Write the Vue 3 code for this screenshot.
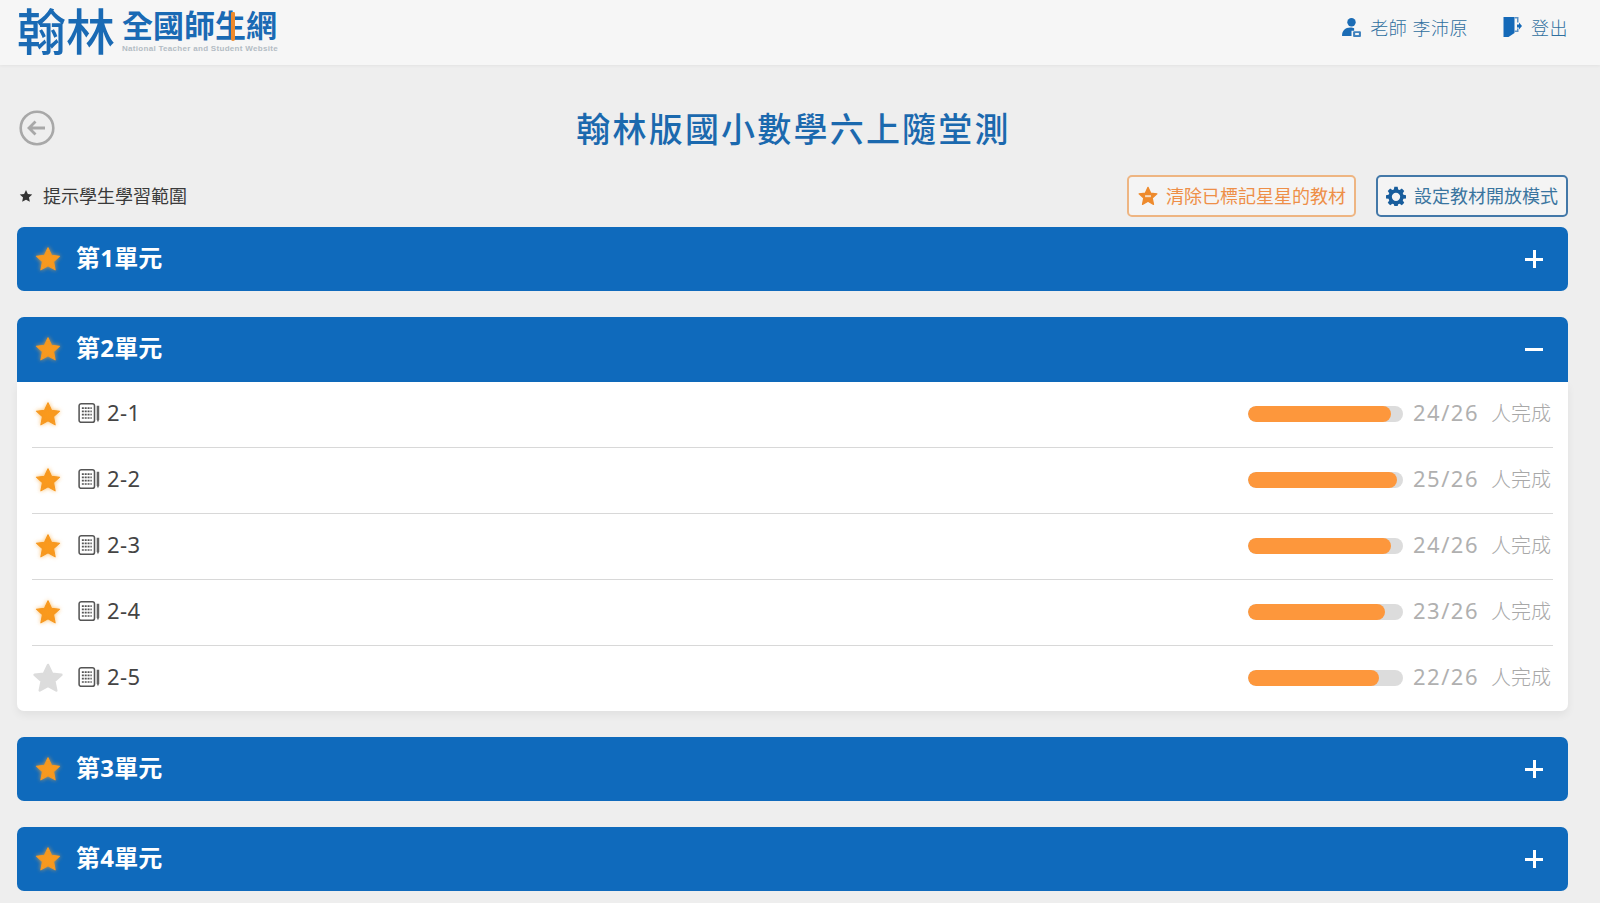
<script setup>
const units = [
  { name: '第1單元', open: false },
  {
    name: '第2單元',
    open: true,
    rows: [
      { id: '2-1', done: 24, starred: true },
      { id: '2-2', done: 25, starred: true },
      { id: '2-3', done: 24, starred: true },
      { id: '2-4', done: 23, starred: true },
      { id: '2-5', done: 22, starred: false },
    ],
  },
  { name: '第3單元', open: false },
  { name: '第4單元', open: false },
]
const total = 26
const starPath = 'M12 1.6l3.2 6.9 7.5.9-5.6 5.1 1.5 7.5L12 18.3l-6.6 3.7 1.5-7.5L1.3 9.4l7.5-.9z'
</script>

<template>
  <div class="page">
    <svg class="defs" width="0" height="0" aria-hidden="true">
      <defs>
        <radialGradient id="starFill" cx="50%" cy="55%" r="55%">
          <stop offset="0%" stop-color="#fb9a1c" />
          <stop offset="70%" stop-color="#f7981f" />
          <stop offset="100%" stop-color="#f9b650" />
        </radialGradient>
      </defs>
    </svg>

    <header class="topbar">
      <div class="logo">
        <span class="logo-main">翰林</span>
        <div class="logo-side">
          <span class="logo-name">全國師生網</span>
          <span class="logo-en">National Teacher and Student Website</span>
          <i class="logo-pencil"></i>
        </div>
      </div>
      <nav class="usernav">
        <span class="navitem">
          <svg class="navicon" viewBox="0 0 20 20">
            <circle cx="10" cy="5" r="4" fill="#1b6cb5" />
            <path d="M1 18c0-5 3-8 8-8 1.500 0 2.500.2 3.500.7V13H10v5z" fill="#1b6cb5" />
            <rect x="11.500" y="13.500" width="7.500" height="5.500" rx="1" fill="#3d80bd" />
            <rect x="13.500" y="15.200" width="3.500" height="2" fill="#f5f5f5" />
          </svg>
          老師 李沛原
        </span>
        <span class="navitem">
          <svg class="navicon door" viewBox="0 0 20 22">
            <path d="M1 1h11v16l-6 4H1z" fill="#1469b8" />
            <path d="M12 1h4v5.500h-1.500V2.500H12zM12 16h4v-3.500h-1.500v2H12z" fill="#5d93c6" />
            <path d="M14.500 8.500h2V6.500l3 3.500-3 3.500v-2h-2z" fill="#1469b8" />
          </svg>
          登出
        </span>
      </nav>
    </header>

    <main class="content">
      <div class="titlebar">
        <svg class="back" viewBox="0 0 36 36">
          <circle cx="18" cy="18" r="16.300" fill="none" stroke="#a8a8a8" stroke-width="2.600" />
          <path d="M26 18H10M16.500 11.500 10 18l6.500 6.500" fill="none" stroke="#a8a8a8" stroke-width="2.800" />
        </svg>
        <h1 class="title">翰林版國小數學六上隨堂測</h1>
      </div>

      <div class="toolbar">
        <div class="legend">
          <svg class="legend-star" viewBox="0 0 24 24"><path :d="starPath" fill="#333" /></svg>
          <span class="shift">提示學生學習範圍</span>
        </div>
        <div class="actions">
          <button class="btn btn-clear" type="button">
            <svg class="btn-icon" viewBox="0 0 24 24">
              <path :d="starPath" fill="#ee8a2c" stroke="#ee8a2c" stroke-width="1.500" stroke-linejoin="round" />
              <rect x="8.500" y="11" width="7" height="2.400" fill="#f6dcc2" />
            </svg>
            <span class="shift">清除已標記星星的教材</span>
          </button>
          <button class="btn btn-set" type="button">
            <svg class="btn-icon" viewBox="0 0 24 24">
              <path
                fill="#185d9c"
                fill-rule="evenodd"
                d="M10 1h4l.6 3.100 1.800.8L19 3.100 21.900 6l-1.800 2.600.8 1.800L24 11v4l-3.100.4-.8 1.900 1.800 2.700L19 23l-2.600-1.800-1.800.7L14 24h-4l-.6-2.100-1.800-.7L5 23l-2.900-3 1.800-2.700-.8-1.900L0 15v-4l3.100-.6.800-1.800L2.100 6 5 3.100l2.600 1.800 1.800-.8zM12 8a5 5 0 1 0 0 10 5 5 0 0 0 0-10z"
              />
            </svg>
            <span class="shift">設定教材開放模式</span>
          </button>
        </div>
      </div>

      <section v-for="unit in units" :key="unit.name" class="unit">
        <div class="unit-head" :class="{ 'unit-head-open': unit.open }">
          <svg class="star" viewBox="0 0 24 24"><path :d="starPath" fill="url(#starFill)" stroke="#f7981f" stroke-width="1" stroke-linejoin="round" /></svg>
          <span class="unit-name">{{ unit.name }}</span>
          <span class="toggle" :class="{ 'toggle-open': unit.open }"></span>
        </div>
        <ul v-if="unit.open" class="rows">
          <li v-for="row in unit.rows" :key="row.id" class="row">
            <svg class="star" :class="{ 'star-off': !row.starred }" viewBox="0 0 24 24">
              <path
                :d="starPath"
                :fill="row.starred ? 'url(#starFill)' : '#dcdcdc'"
                :stroke="row.starred ? '#f7981f' : '#dcdcdc'"
                :stroke-width="row.starred ? 1 : 2"
                stroke-linejoin="round"
              />
            </svg>
            <svg class="book" viewBox="0 0 20 20">
              <rect x="1" y="1.500" width="14" height="17" rx="2" fill="none" stroke="#555" stroke-width="1.400" />
              <path d="M3.500 5.500h9M3.500 8.500h9M3.500 11.500h9M3.500 14.500h9" stroke="#555" stroke-width="1.500" stroke-dasharray="1.800 .8" />
              <path d="M17 3.500h2.300V16l-1.150 2.500L17 16z" fill="#666" />
            </svg>
            <span class="row-id">{{ row.id }}</span>
            <div class="bar">
              <div class="bar-fill" :style="{ width: (row.done / total) * 100 + '%' }"></div>
            </div>
            <span class="count">{{ row.done }}/{{ total }}</span>
            <span class="count-label">人完成</span>
          </li>
        </ul>
      </section>
    </main>
  </div>
</template>

<style scoped>
.page {
  height: 903px;
  overflow: hidden;
  background: #eeeeee;
  font-family: "Noto Sans", "Noto Sans CJK TC", sans-serif;
  color: #333;
}
.defs {
  position: absolute;
}
.topbar {
  height: 65px;
  box-sizing: border-box;
  padding: 0 32px 0 17px;
  display: flex;
  align-items: center;
  justify-content: space-between;
  background: #f6f6f6;
  box-shadow: 0 1px 3px rgba(0, 0, 0, 0.05);
}
.logo {
  display: flex;
  align-items: center;
  gap: 7px;
  margin-top: -5px;
  color: #1a6ab4;
}
.logo-main {
  font-family: "Liberation Sans", "Noto Sans CJK TC", sans-serif;
  font-size: 49px;
  line-height: 52px;
  font-weight: 500;
  position: relative;
  top: 3px;
}
.logo-side {
  position: relative;
  display: flex;
  flex-direction: column;
  margin-top: 4px;
}
.logo-name {
  font-family: "Liberation Sans", "Noto Sans CJK TC", sans-serif;
  font-size: 31px;
  line-height: 32px;
  font-weight: 700;
}
.logo-en {
  font-family: "Liberation Sans", sans-serif;
  font-size: 8px;
  line-height: 9px;
  font-weight: 700;
  color: #b3bcc4;
  white-space: nowrap;
  letter-spacing: 0.3px;
  margin-top: 1px;
}
.logo-pencil {
  position: absolute;
  left: 109px;
  top: 1px;
  width: 4px;
  height: 29px;
  background: #ee8a2c;
  border-radius: 2px 2px 3px 3px;
}
.usernav {
  display: flex;
  align-items: center;
  gap: 34px;
  margin-top: -11px;
}
.navitem {
  display: flex;
  align-items: center;
  gap: 8px;
  font-size: 18px;
  font-weight: 300;
  letter-spacing: 0.5px;
  color: #2f6f9f;
}
.navicon {
  width: 21px;
  height: 21px;
}
.door {
  height: 22px;
}
.content {
  padding: 0 32px 0 17px;
}
.titlebar {
  position: relative;
  height: 79px;
  margin-top: 25px;
  display: flex;
  align-items: flex-start;
  justify-content: center;
}
.back {
  position: absolute;
  left: 2px;
  top: 20px;
  width: 36px;
  height: 36px;
}
.title {
  margin: 14px 0 0;
  padding-left: 2px;
  font-size: 34px;
  line-height: 50px;
  font-weight: 500;
  letter-spacing: 2.2px;
  color: #1b69ae;
}
.toolbar {
  display: flex;
  align-items: center;
  justify-content: space-between;
  height: 42px;
  margin-top: 6px;
  margin-bottom: 10px;
}
.shift {
  padding-bottom: 3px;
}
.legend {
  display: flex;
  align-items: center;
  gap: 10px;
  font-size: 18px;
  font-weight: 400;
  color: #3a3a3a;
  padding-left: 2px;
}
.legend-star {
  width: 14px;
  height: 14px;
}
.actions {
  display: flex;
  gap: 20px;
}
.btn {
  height: 42px;
  box-sizing: border-box;
  display: flex;
  align-items: center;
  gap: 8px;
  padding: 0 8px 0 9px;
  border-radius: 5px;
  background: #f4f4f4;
  font-family: inherit;
  font-size: 18px;
  font-weight: 400;
  white-space: nowrap;
}
.btn-clear {
  width: 229px;
  border: 2px solid #eeb582;
  color: #ee8f48;
}
.btn-set {
  width: 192px;
  padding-left: 8px;
  border: 2px solid #4378a8;
  color: #3a759f;
}
.btn-icon {
  width: 20px;
  height: 20px;
  flex: none;
}
.unit {
  margin-bottom: 25.6px;
}
.unit-head {
  height: 64.4px;
  box-sizing: border-box;
  padding: 0 16px 0 18px;
  display: flex;
  align-items: center;
  border-radius: 7px;
  background: #0f6abc;
  color: #fff;
}
.unit-head-open {
  height: 65px;
  border-radius: 7px 7px 0 0;
}
.star {
  width: 26px;
  height: 26px;
  flex: none;
  margin-top: -1px;
  filter: drop-shadow(0 0 2px rgba(250, 170, 60, 0.8));
}
.star-off {
  width: 30px;
  height: 30px;
  margin: -1px -2px 0;
  filter: none;
}
.unit-name {
  margin-left: 15px;
  padding-bottom: 6px;
  font-size: 24px;
  letter-spacing: 0.2px;
  font-weight: 700;
}
.toggle {
  position: relative;
  width: 18px;
  height: 18px;
  margin-left: auto;
  margin-right: 9px;
}
.toggle::before,
.toggle::after {
  content: "";
  position: absolute;
  background: #fff;
}
.toggle::before {
  left: 0;
  right: 0;
  top: 7.5px;
  height: 3px;
}
.toggle::after {
  top: 0;
  bottom: 0;
  left: 7.5px;
  width: 3px;
}
.toggle-open::after {
  display: none;
}
.rows {
  list-style: none;
  margin: 0;
  padding: 0 15px;
  background: #fff;
  border-radius: 0 0 7px 7px;
  box-shadow: 0 4px 8px rgba(0, 0, 0, 0.06);
}
.row {
  height: 65.9px;
  box-sizing: border-box;
  display: flex;
  align-items: center;
  padding-left: 3px;
  border-bottom: 1px solid #d8d8d8;
}
.row:last-child {
  border-bottom: none;
}
.book {
  width: 22px;
  height: 22px;
  margin-left: 17px;
  margin-top: -2px;
  flex: none;
}
.row-id {
  margin-left: 7px;
  padding-bottom: 5px;
  font-size: 22px;
  letter-spacing: 0.4px;
  color: #444;
}
.bar {
  margin-left: auto;
  width: 155px;
  height: 16px;
  margin-top: -1px;
  border-radius: 8px;
  background: #dcdcdc;
  overflow: hidden;
}
.bar-fill {
  height: 100%;
  border-radius: 8px;
  background: #fd973c;
}
.count {
  margin-left: 10px;
  padding-bottom: 5px;
  font-size: 22px;
  letter-spacing: 1.5px;
  color: #b0b0b0;
}
.count-label {
  margin-left: 12px;
  margin-right: 2px;
  padding-bottom: 4px;
  font-size: 20px;
  font-weight: 300;
  color: #a8a8a8;
}
</style>

<style>
html,
body {
  margin: 0;
  background: #eeeeee;
}
</style>
